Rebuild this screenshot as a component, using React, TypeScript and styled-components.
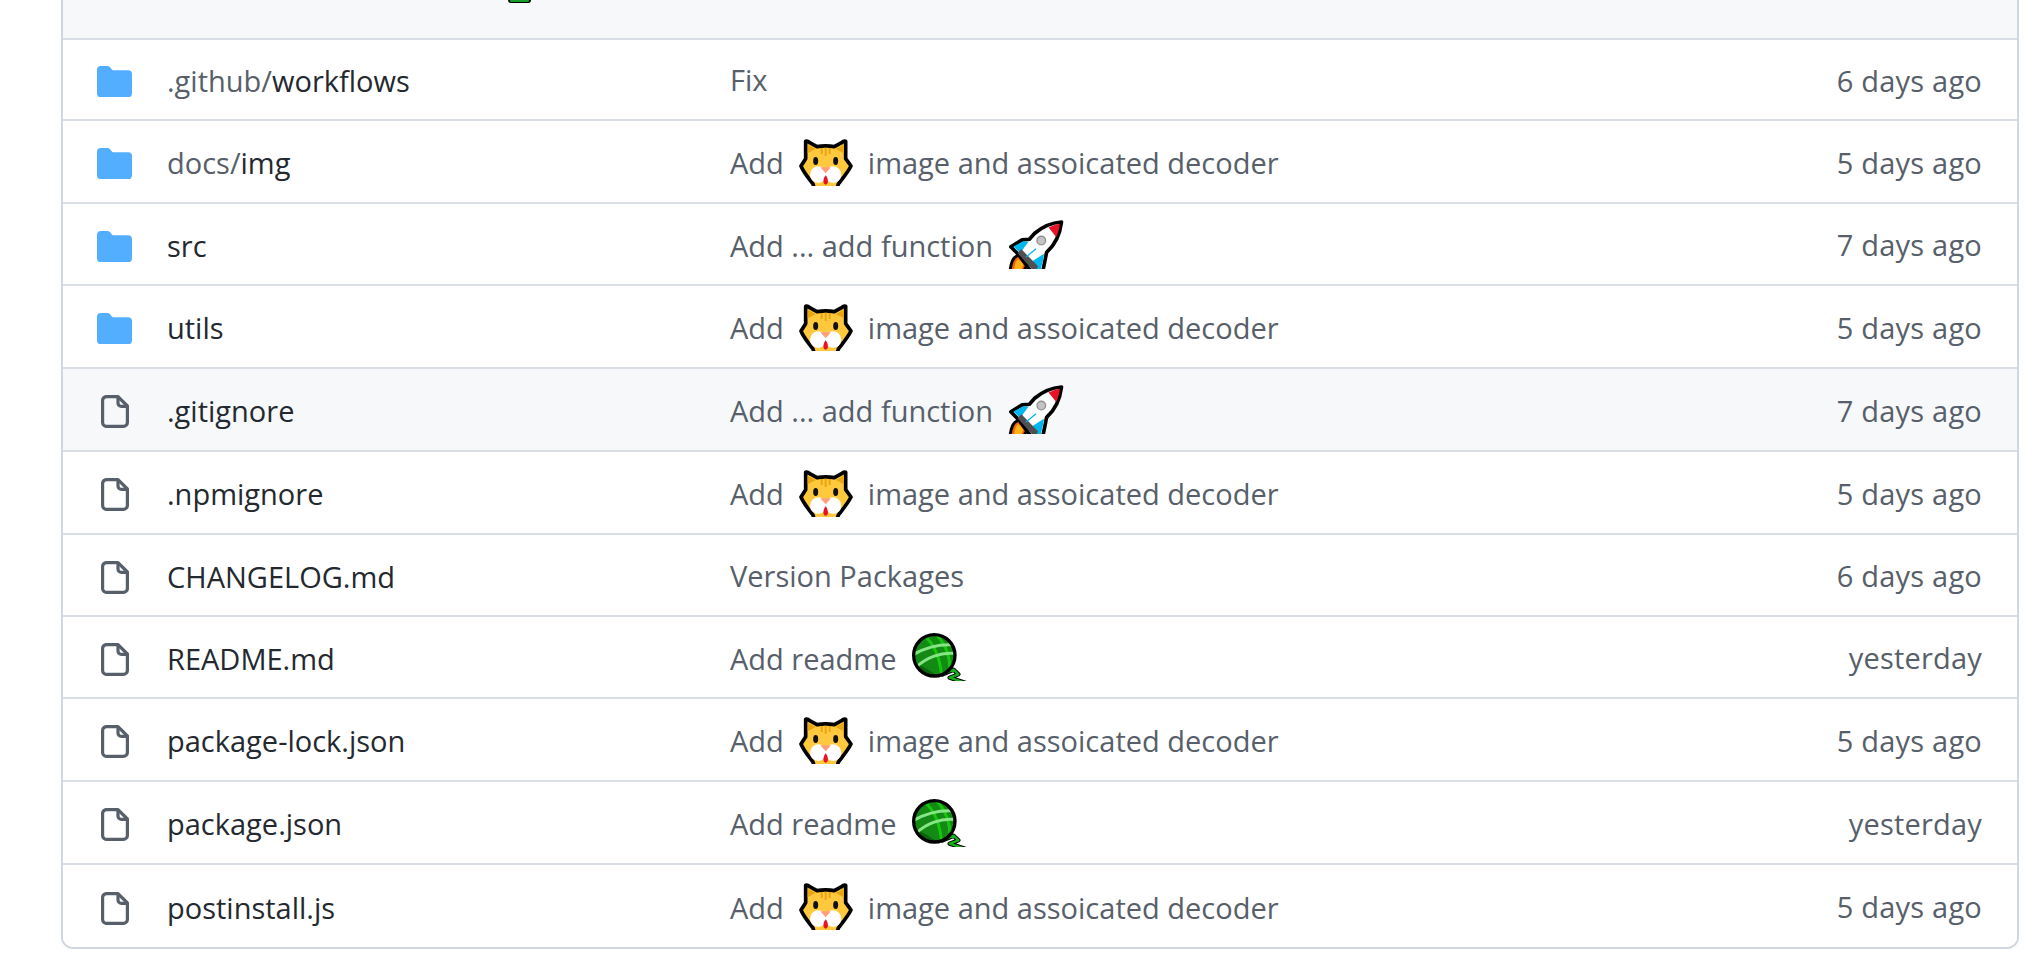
import React from "react";
import styled, { createGlobalStyle } from "styled-components";

const Global = createGlobalStyle`
  html, body { margin: 0; padding: 0; background: #fff; overflow: hidden; }
  body { font-family: "Open Sans", "Noto Sans", sans-serif; }
`;

const Page = styled.div`
  width: 2041px;
  height: 957px;
  padding: 0 22px 0 61px;
  box-sizing: border-box;
`;

const Table = styled.div`
  height: 949px;
  box-sizing: border-box;
  border: solid #d0d7de;
  border-width: 0 2px 2px 2px;
  border-radius: 0 0 12px 12px;
  display: flex;
  flex-direction: column;
  overflow: hidden;
`;

const Header = styled.div`
  height: 38px;
  flex: none;
  background: #f6f8fa;
  position: relative;
`;

const HeaderTail = styled.div`
  position: absolute;
  left: 445px;
  top: 0;
  width: 23px;
  height: 3px;
  background: #1a9c2b;
  border: solid #000;
  border-width: 0 2px 1px 2px;
  border-radius: 0 0 3px 3px;
  box-sizing: border-box;
`;

const Row = styled.div<{ $h: number; $hover?: boolean }>`
  height: ${(p) => p.$h}px;
  flex: none;
  box-sizing: border-box;
  border-top: 2px solid #d8dee4;
  background: ${(p) => (p.$hover ? "#f6f8fa" : "#fff")};
  display: grid;
  grid-template-columns: 70px 563px 1fr auto;
  align-items: center;
  padding: 0 35px 0 34px;
  font-size: 29px;
  color: #57606a;
`;

const IconCell = styled.div<{ $folder?: boolean }>`
  display: flex;
  align-items: center;
  padding-top: 4px;
  padding-left: ${(p) => (p.$folder ? 0 : 4)}px;
`;

const Name = styled.div`
  color: #24292f;
  white-space: nowrap;
  padding-top: 2px;
`;

const Dim = styled.span`
  color: #57606a;
`;

const Message = styled.div<{ $emoji?: boolean }>`
  display: flex;
  align-items: center;
  white-space: nowrap;
  padding-top: ${(p) => (p.$emoji ? 2 : 0)}px;
`;

const EmojiSlot = styled.span`
  display: inline-flex;
  margin: -2px 15px 0;
`;

const Age = styled.div`
  text-align: right;
  white-space: nowrap;
  padding-top: 1px;
  letter-spacing: 0.2px;
`;

const Folder = () => (
  <svg width="35" height="31" viewBox="0 0 36 32" preserveAspectRatio="none">
    <path
      d="M0 4a4 4 0 0 1 4-4h6.5a4 4 0 0 1 3 1.4l2 2.4a1.5 1.5 0 0 0 1.2.5H32a4 4 0 0 1 4 4V28a4 4 0 0 1-4 4H4a4 4 0 0 1-4-4Z"
      fill="#54aeff"
    />
  </svg>
);

const FileIcon = () => (
  <svg width="28" height="33" viewBox="0 0 28 33" fill="none" stroke="#57606a" strokeWidth="3.2" strokeLinejoin="round">
    <path d="M6 1.6 H17 L26.4 11 V27.4 a4 4 0 0 1-4 4 H6 a4 4 0 0 1-4.4-4 V6 a4 4 0 0 1 4.4-4.4 Z" />
    <path d="M17 2 V8 a3.4 3.4 0 0 0 3.4 3.4 H26" />
  </svg>
);

const Cat = () => (
  <svg width="54" height="48" viewBox="30 24 162 144">
    <path
      d="M50 34 Q56 32 62 38 L84 50 Q110 45 136 50 L158 38 Q164 32 170 34 V86 L186 108 C176 128 160 146 148 162 L140 190 H80 L72 162 C60 146 44 128 36 108 L50 86 Z"
      fill="#ffc83d" stroke="#000" strokeWidth="11" strokeLinejoin="round"
    />
    <path d="M56 44 L80 57 L56 70 Z" fill="#e8a711" />
    <path d="M164 44 L140 57 L164 70 Z" fill="#e8a711" />
    <path d="M98 54 V72 M110 53 V78 M122 54 V72" stroke="#e9a512" strokeWidth="6" />
    <ellipse cx="80" cy="93" rx="7.5" ry="12" fill="#111" />
    <ellipse cx="140" cy="93" rx="7.5" ry="12" fill="#111" />
    <circle cx="88" cy="134" r="25" fill="#fff" />
    <circle cx="132" cy="134" r="25" fill="#fff" />
    <path d="M94 112 H126 L110 130 Z" fill="#ff9f7a" />
    <path d="M110 136 C100 148 102 164 110 164 C118 164 120 148 110 136 Z" fill="#e81224" />
  </svg>
);

const Rocket = () => (
  <svg width="56" height="49" viewBox="22 12 168 148">
    <path d="M56 118 C36 122 30 140 27 172 H66 L80 146 Z" fill="#f7630c" stroke="#000" strokeWidth="9" strokeLinejoin="round" />
    <path d="M52 130 C44 136 40 148 40 170 H58 L68 146 Z" fill="#fcb316" />
    <path
      d="M183 18 C158 20 128 30 102 52 L86 70 L64 72 L30 93 L55 118 L100 180 L124 180 L134 130 L138 110 C160 90 178 60 183 18 Z"
      fill="#fff" stroke="#000" strokeWidth="11" strokeLinejoin="round"
    />
    <path d="M38 92 L66 77 L84 77 L58 112 Z" fill="#00b7f0" />
    <path d="M130 114 L128 130 L118 170 L100 170 L92 138 Z" fill="#00b7f0" />
    <path d="M62 100 L112 152 L104 172 L50 112 Z" fill="#505050" />
    <path d="M144 35 C156 28 168 24 178 23 C177 36 172 52 167 63 Z" fill="#e81224" />
    <circle cx="122" cy="74" r="13" fill="#c4c4c4" stroke="#8f8f8f" strokeWidth="4" />
    <path d="M76 124 L106 99" stroke="#00b7f0" strokeWidth="4" />
  </svg>
);

const Yarn = () => (
  <svg width="56" height="48" viewBox="30 26 168 144">
    <defs>
      <clipPath id="yarnclip"><circle cx="100" cy="93" r="62" /></clipPath>
    </defs>
    <path d="M120 152 L158 136 L172 150 L146 160 L195 176" fill="none" stroke="#000" strokeWidth="13" strokeLinejoin="round" />
    <path d="M120 152 L158 136 L172 150 L146 160 L195 176" fill="none" stroke="#16b01c" strokeWidth="7" strokeLinejoin="round" />
    <circle cx="100" cy="93" r="62" fill="#128a14" />
    <g clipPath="url(#yarnclip)" fill="none">
      <path d="M36 110 C60 125 95 140 112 160 L60 170 L30 130 Z" fill="#0c640e" stroke="none" />
      <path d="M125 30 C150 55 165 90 160 130 L170 90 L150 30 Z" fill="#0c640e" stroke="none" />
      <path d="M70 34 C100 60 118 100 122 160" stroke="#16c60c" strokeWidth="9" />
      <path d="M105 30 C130 55 146 90 146 130" stroke="#16c60c" strokeWidth="9" />
      <path d="M38 90 C70 72 115 58 162 62" stroke="#86e686" strokeWidth="9" />
      <path d="M46 128 C75 100 120 82 165 88" stroke="#86e686" strokeWidth="9" />
    </g>
    <circle cx="100" cy="93" r="62" fill="none" stroke="#000" strokeWidth="10" />
  </svg>
);

type Commit = "cat" | "rocket" | "yarn" | "fix" | "version";

const CommitMessage = ({ kind }: { kind: Commit }) => {
  if (kind === "fix") return <Message>Fix</Message>;
  if (kind === "version") return <Message>Version Packages</Message>;
  if (kind === "rocket")
    return (
      <Message $emoji>
        Add ... add function
        <EmojiSlot><Rocket /></EmojiSlot>
      </Message>
    );
  if (kind === "yarn")
    return (
      <Message $emoji>
        Add readme
        <EmojiSlot><Yarn /></EmojiSlot>
      </Message>
    );
  return (
    <Message $emoji>
      Add
      <EmojiSlot><Cat /></EmojiSlot>
      image and assoicated decoder
    </Message>
  );
};

const rows: { dir?: string; name: string; folder?: boolean; kind: Commit; age: string; h: number; hover?: boolean }[] = [
  { dir: ".github/", name: "workflows", folder: true, kind: "fix", age: "6 days ago", h: 81 },
  { dir: "docs/", name: "img", folder: true, kind: "cat", age: "5 days ago", h: 83 },
  { name: "src", folder: true, kind: "rocket", age: "7 days ago", h: 82 },
  { name: "utils", folder: true, kind: "cat", age: "5 days ago", h: 83 },
  { name: ".gitignore", kind: "rocket", age: "7 days ago", h: 83, hover: true },
  { name: ".npmignore", kind: "cat", age: "5 days ago", h: 83 },
  { name: "CHANGELOG.md", kind: "version", age: "6 days ago", h: 82 },
  { name: "README.md", kind: "yarn", age: "yesterday", h: 82 },
  { name: "package-lock.json", kind: "cat", age: "5 days ago", h: 83 },
  { name: "package.json", kind: "yarn", age: "yesterday", h: 83 },
  { name: "postinstall.js", kind: "cat", age: "5 days ago", h: 84 },
];

export default function App() {
  return (
    <Page>
      <Global />
      <Table>
        <Header><HeaderTail /></Header>
        {rows.map((r) => (
          <Row key={r.name} $h={r.h} $hover={r.hover}>
            <IconCell $folder={r.folder}>{r.folder ? <Folder /> : <FileIcon />}</IconCell>
            <Name>
              {r.dir && <Dim>{r.dir}</Dim>}
              {r.name}
            </Name>
            <CommitMessage kind={r.kind} />
            <Age>{r.age}</Age>
          </Row>
        ))}
      </Table>
    </Page>
  );
}
